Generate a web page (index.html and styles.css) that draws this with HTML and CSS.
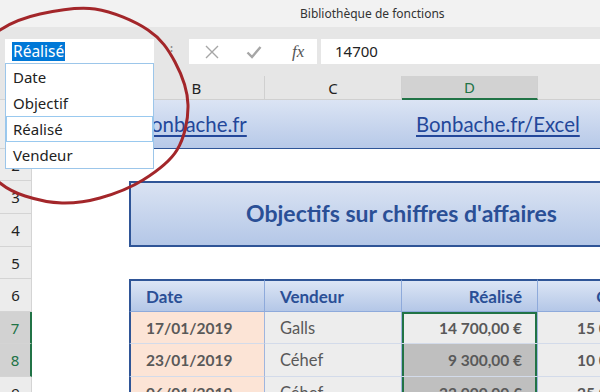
FILE: index.html
```html
<!DOCTYPE html>
<html lang="fr">
<head>
<meta charset="utf-8">
<title>Bibliothèque de fonctions</title>
<link rel="stylesheet" href="styles.css">
</head>
<body>
<div class="app">
  <div class="titlebar"><span class="title">Bibliothèque de fonctions</span></div>
  <div class="formulabar">
    <div class="namebox"><span class="nbsel">Réalisé</span></div>
    <div class="grip">⋮</div>
    <div class="fbtns">
      <svg class="ico" width="14" height="14" viewBox="0 0 14 14"><path d="M1 1 L13 13 M13 1 L1 13" stroke="#a6a6a6" stroke-width="1.4" fill="none"/></svg>
      <svg class="ico" width="16" height="14" viewBox="0 0 16 14"><path d="M1.5 7.5 L6 12 L14.5 2" stroke="#a6a6a6" stroke-width="2.4" fill="none"/></svg>
      <span class="fx">fx</span>
    </div>
    <div class="finput">14700</div>
  </div>

  <div class="sheet">
    <div class="corner"></div>
    <div class="ch">A</div>
    <div class="ch">B</div>
    <div class="ch">C</div>
    <div class="ch ch-sel">D</div>
    <div class="ch">E</div>

    <div class="rh">1</div>
    <div class="band">
      <a class="link link-one" href="#">Bonbache.fr</a>
      <a class="link" href="#">Bonbache.fr/Excel</a>
    </div>

    <div class="rh">2</div>
    <div class="blank"></div>

    <div class="rh">3</div>
    <div class="cell"></div>
    <div class="titlebox">Objectifs sur chiffres d'affaires</div>
    <div class="rh">4</div>
    <div class="cell"></div>

    <div class="rh">5</div>
    <div class="blank"></div>

    <div class="rh">6</div>
    <div class="cell"></div>
    <div class="th th-first">Date</div>
    <div class="th">Vendeur</div>
    <div class="th th-num">Réalisé</div>
    <div class="th th-num">Objectif</div>

    <div class="rh rh-sel">7</div>
    <div class="cell"></div>
    <div class="td td-date">17/01/2019</div>
    <div class="td">Galls</div>
    <div class="td td-num td-active">14 700,00 €</div>
    <div class="td td-num td-bold">15 000,00 €</div>

    <div class="rh rh-sel">8</div>
    <div class="cell"></div>
    <div class="td td-date">23/01/2019</div>
    <div class="td">Céhef</div>
    <div class="td td-num td-range">9 300,00 €</div>
    <div class="td td-num td-bold">10 000,00 €</div>

    <div class="rh">9</div>
    <div class="cell"></div>
    <div class="td td-date">06/01/2019</div>
    <div class="td">Céhef</div>
    <div class="td td-num td-range">23 000,00 €</div>
    <div class="td td-num td-bold">25 000,00 €</div>
  </div>

  <ul class="dropdown">
    <li class="dd-item">Date</li>
    <li class="dd-item">Objectif</li>
    <li class="dd-item dd-hover">Réalisé</li>
    <li class="dd-item">Vendeur</li>
  </ul>

  <svg class="ring" width="600" height="392" viewBox="0 0 600 392">
    <path d="M0 30 C10.8 22.7 24.2 17.5 40 14 C55.8 10.5 77 6.3 95 9 C113 11.7 134.7 21.2 148 30 C161.3 38.8 168.3 49.5 175 62 C181.7 74.5 187.7 90.3 188 105 C188.3 119.7 184.5 137.5 177 150 C169.5 162.5 155.8 172 143 180 C130.2 188 113.5 194.2 100 198 C86.5 201.8 74.5 203.3 62 203 C49.5 202.7 35.3 199.3 25 196 C14.7 192.7 8.3 189.8 0 183 C-8.3 176.2 -19.2 167.7 -25 155 C-30.8 142.3 -35 123.2 -35 107 C-35 90.8 -30.8 70.8 -25 58 C-19.2 45.2 -10.8 37.3 0 30 Z" fill="none" stroke="#a3262a" stroke-width="3"/>
  </svg>
</div>
</body>
</html>
```

FILE: styles.css
```css
* { box-sizing: border-box; }
html, body { margin: 0; padding: 0; }
body {
  width: 600px;
  height: 392px;
  overflow: hidden;
  background: #ffffff;
  font-family: "Noto Sans", "Open Sans", sans-serif;
}
.app {
  position: relative;
  width: 600px;
  height: 392px;
  overflow: hidden;
}

/* title bar */
.titlebar {
  height: 27px;
  background: #f2f2f2;
  padding-left: 300px;
  display: flex;
  align-items: center;
}
.title {
  font-size: 12px;
  color: #333333;
  white-space: nowrap;
}

/* formula bar */
.formulabar {
  height: 49px;
  background: #e6e6e6;
  display: flex;
  align-items: flex-start;
  padding: 12px 0 0 5px;
}
.namebox {
  width: 149px;
  height: 24px;
  background: #ffffff;
  display: flex;
  align-items: center;
  padding-left: 7px;
}
.nbsel {
  background: #0078d7;
  color: #ffffff;
  font-size: 15.5px;
  line-height: 19px;
  padding: 0 1px;
}
.grip {
  width: 35px;
  height: 24px;
  color: #8a8a8a;
  font-size: 13px;
  text-align: center;
  line-height: 22px;
}
.fbtns {
  width: 128px;
  height: 25px;
  background: #ffffff;
  display: flex;
  align-items: center;
  padding-left: 16px;
  gap: 27px;
}
.fx {
  font-family: "Liberation Serif", serif;
  font-style: italic;
  font-size: 17px;
  color: #555555;
  margin-left: 3px;
}
.finput {
  margin-left: 4px;
  flex: 1;
  height: 25px;
  background: #ffffff;
  font-size: 15px;
  color: #222222;
  padding-left: 14px;
  line-height: 24px;
}

/* sheet grid */
.sheet {
  width: 674px;
  display: grid;
  grid-template-columns: 32px 97px 136px 137px 136px 136px;
  grid-template-rows: 24px 49px 32px 33px 33px 32px 33px 32px 33px 33px;
  font-family: "Lato", "Liberation Sans", sans-serif;
}
.corner {
  background: #e6e6e6;
  border-right: 1px solid #d4d4d4;
  border-bottom: 1px solid #d4d4d4;
}
.ch {
  background: #e6e6e6;
  border-right: 1px solid #d0d0d0;
  border-bottom: 1px solid #d0d0d0;
  font-family: "Noto Sans", sans-serif;
  font-size: 15px;
  color: #222222;
  display: flex;
  align-items: center;
  justify-content: center;
}
.ch-sel {
  background: #d2d2d2;
  color: #217346;
  border-bottom: 2px solid #217346;
}
.rh {
  background: #ececec;
  border-right: 1px solid #d4d4d4;
  border-bottom: 1px solid #d4d4d4;
  font-family: "Noto Sans", sans-serif;
  font-size: 15px;
  color: #222222;
  display: flex;
  align-items: center;
  justify-content: center;
}
.rh-sel {
  background: #d2d2d2;
  color: #217346;
  border-right: 2px solid #217346;
}
.band {
  grid-column: span 5;
  background: linear-gradient(#dbe4f4, #b7c9e8);
  border-bottom: 1px solid #2f5597;
  display: flex;
  align-items: center;
  padding-left: 106px;
}
.link {
  font-size: 20.4px;
  color: #23479a;
  text-decoration: underline;
  text-underline-offset: 3px;
  white-space: nowrap;
  flex: none;
}
.link-one {
  width: 278px;
}
.blank {
  grid-column: span 5;
}
.titlebox {
  grid-column: span 4;
  grid-row: span 2;
  background: linear-gradient(#dae3f3, #b4c7e7);
  border: 2px solid #2f5597;
  display: flex;
  align-items: center;
  justify-content: center;
  font-size: 23px;
  font-weight: 700;
  color: #2a4f96;
  padding-bottom: 2px;
}
.th {
  background: linear-gradient(#dce5f5, #b4c7e7);
  border-top: 2px solid #2f5597;
  border-right: 1px solid #8eaadb;
  border-bottom: 1px solid #8eaadb;
  font-size: 17px;
  font-weight: 700;
  color: #2a4f96;
  display: flex;
  align-items: center;
  padding: 0 15px;
}
.th-first {
  border-left: 2px solid #2f5597;
}
.th-num {
  justify-content: flex-end;
}
.td {
  background: #ededed;
  border-right: 1px solid #9fb5de;
  border-bottom: 1px solid #d3dbea;
  font-size: 16.5px;
  color: #595959;
  display: flex;
  align-items: center;
  padding: 0 15px;
  white-space: nowrap;
}
.td-date {
  background: #fce4d6;
  font-weight: 700;
  font-size: 15.5px;
  border-left: 2px solid #2f5597;
}
.td-num {
  justify-content: flex-end;
  font-weight: 700;
  font-size: 15.5px;
}
.td-bold {
  justify-content: flex-start;
  padding-left: 39px;
}
.td-active {
  box-shadow: inset 2px 2px 0 #217346, inset -2px 0 0 #217346;
}
.td-range {
  background: #bfbfbf;
  box-shadow: inset 2px 0 0 #217346, inset -2px 0 0 #217346;
}

/* name box dropdown (overlay) */
.dropdown {
  position: absolute;
  left: 5px;
  top: 63px;
  width: 149px;
  margin: 0;
  padding: 0;
  list-style: none;
  background: #ffffff;
  border: 1px solid #9cc6ea;
}
.dd-item {
  height: 26px;
  line-height: 24px;
  padding-left: 6px;
  font-size: 15px;
  color: #222222;
  border: 1px solid transparent;
}
.dd-hover {
  border-color: #99c9ef;
}

/* red highlight ring (overlay) */
.ring {
  position: absolute;
  left: 0;
  top: 0;
  pointer-events: none;
}
```
